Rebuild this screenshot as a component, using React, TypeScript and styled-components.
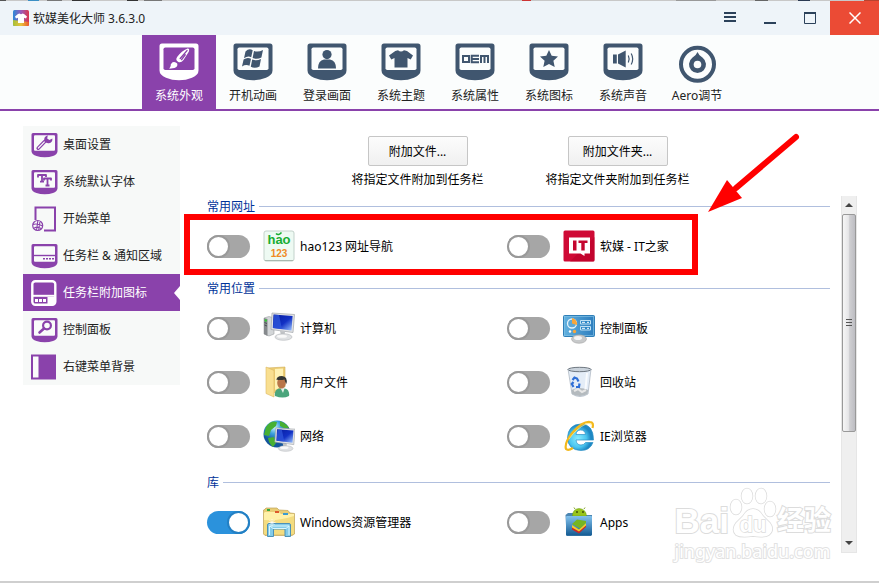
import React from 'react';
import styled, { createGlobalStyle } from 'styled-components';

const PURPLE = '#8a42ab';
const NAVY = '#40566f';

const GlobalStyle = createGlobalStyle`
  *, *::before, *::after { box-sizing: border-box; }
  body {
    margin: 0;
    background: #fff;
    color: #000;
    font: 12px/17px "Noto Sans", "Noto Sans CJK SC", sans-serif;
  }
  button, input { font: inherit; color: inherit; margin: 0; }
  button { padding: 0; border: 0; background: none; cursor: pointer; }
  svg { display: block; flex: none; }
`;

const Window = styled.div`
  display: flex;
  flex-direction: column;
  min-height: 100vh;
  border-bottom: 2px solid #cfcfcf;
`;

const TopEdge = styled.div`
  height: 1px;
  background: linear-gradient(
    90deg,
    #555 6px, #c8c8c8 6px 28px, #3b8fc4 28px 39px, #c8c8c8 39px 47px, #777 47px 62px,
    #c8c8c8 62px 72px, #333 72px 90px, #c8c8c8 90px 127px, #333 127px 138px,
    #c8c8c8 138px 144px, #777 144px 162px, #c8c8c8 162px 522px, #c33 522px 531px,
    #c8c8c8 531px 676px, #999 676px 716px, #c8c8c8 716px 755px, #666 755px 768px,
    #c8c8c8 768px 798px, #2b3a52 798px 810px, #c8c8c8 810px 864px, #b8432f 864px
  );
`;

const TitleBar = styled.header`
  display: flex;
  align-items: stretch;
  height: 34px;
  background: #eef4f9;
`;

const AppTitle = styled.h1`
  display: flex;
  align-items: center;
  gap: 4px;
  flex: 1;
  margin: 0;
  padding-left: 13px;
  font-size: 12px;
  font-weight: 400;
  color: #222;
`;

const WindowButton = styled.button<{ $close?: boolean }>`
  display: flex;
  align-items: center;
  justify-content: center;
  width: ${p => (p.$close ? 49 : 40)}px;
  background: ${p => (p.$close ? '#eb4b35' : 'transparent')};
`;

const TabBar = styled.nav`
  display: flex;
  padding-left: 142px;
  border-bottom: 2px solid ${PURPLE};
  background: #fbfdfd;
`;

const Tab = styled.button<{ $active?: boolean }>`
  display: flex;
  flex-direction: column;
  align-items: center;
  gap: 6px;
  width: 74px;
  height: 74px;
  padding-top: 8px;
  white-space: nowrap;
  color: ${p => (p.$active ? '#fff' : '#222')};
  background: ${p => (p.$active ? PURPLE : 'transparent')};
`;

const Main = styled.main`
  display: flex;
  flex: 1;
  padding: 15px 22px 28px 23px;
`;

const Sidebar = styled.nav`
  align-self: flex-start;
  width: 157px;
  background: #f7f9f8;
`;

const SideItem = styled.button<{ $active?: boolean }>`
  position: relative;
  display: flex;
  align-items: center;
  gap: 4px;
  width: 100%;
  height: 37px;
  padding-left: 8px;
  text-align: left;
  color: ${p => (p.$active ? '#fff' : '#222')};
  background: ${p => (p.$active ? PURPLE : 'transparent')};
  &::after {
    content: '';
    display: ${p => (p.$active ? 'block' : 'none')};
    position: absolute;
    right: 0;
    top: 12px;
    border: 7px solid transparent;
    border-right: 6px solid #fff;
    border-left: 0;
  }
`;

const Content = styled.section`
  display: flex;
  flex-direction: column;
  flex: 1;
  margin-left: 27px;
`;

const Actions = styled.div`
  display: grid;
  grid-template-columns: 200px 200px;
  justify-content: center;
  padding: 10px 29px 5px 0;
`;

const Action = styled.div`
  display: flex;
  flex-direction: column;
  align-items: center;
  gap: 5px;
`;

const PushButton = styled.button`
  width: 100px;
  height: 30px;
  border: 1px solid #c6c6c6;
  border-radius: 2px;
  background: linear-gradient(#fcfcfc, #f0f0f0);
`;

const ScrollArea = styled.div`
  display: flex;
  flex: 1;
  gap: 11px;
`;

const Groups = styled.div`
  flex: 1;
`;

const Group = styled.fieldset<{ $gap: number }>`
  position: relative;
  min-width: 0;
  margin: 0 0 ${p => p.$gap}px;
  padding: 0;
  border: 0;
`;

const GroupHeading = styled.h2`
  display: flex;
  align-items: center;
  gap: 4px;
  height: 26px;
  margin: 0;
  font-size: 12px;
  font-weight: 400;
  color: #003399;
  &::after {
    content: '';
    flex: 1;
    height: 1px;
    background: #b0bfde;
  }
`;

const Options = styled.div`
  display: grid;
  grid-template-columns: 1fr 1fr;
  padding-right: 23px;
`;

const Option = styled.label`
  display: flex;
  align-items: center;
  height: 54px;
  gap: 5px;
`;

const Switch = styled.input`
  appearance: none;
  position: relative;
  width: 43px;
  height: 23px;
  margin-right: 8px;
  border-radius: 12px;
  background: #a6a6a6;
  &::before {
    content: '';
    position: absolute;
    left: 0;
    top: 0;
    width: 23px;
    height: 23px;
    border: 2px solid #999;
    border-radius: 50%;
    background: #fff;
  }
  &:checked { background: #2b92dc; }
  &:checked::before {
    left: 20px;
    border-color: #2380c4;
  }
`;

const ScrollBar = styled.div`
  display: flex;
  flex-direction: column;
  width: 16px;
  margin-top: 3px;
  border: solid #e6e6e6;
  border-width: 0 1px 1px;
  background: #efefef;
`;

const ScrollButton = styled.button`
  display: flex;
  align-items: center;
  justify-content: center;
  width: 14px;
  height: 18px;
`;

const Track = styled.div`
  flex: 1;
`;

const Thumb = styled.div`
  display: flex;
  align-items: center;
  justify-content: center;
  height: 68%;
  border: 1px solid #999;
  border-radius: 2px;
  background: linear-gradient(90deg, #f6f6f6, #e6e6e8 45%, #cfcfd2 55%, #bdbdc2);
`;

const Highlight = styled.div`
  position: absolute;
  left: -23px;
  right: 132px;
  top: 21px;
  height: 61px;
  border: 6px solid #f00;
  pointer-events: none;
`;

const Arrow = styled.svg`
  position: absolute;
  right: 28px;
  top: -62px;
  pointer-events: none;
`;

const Watermark = styled.div`
  position: absolute;
  right: 48px;
  bottom: 20px;
  color: #fff;
  paint-order: stroke fill;
  pointer-events: none;
`;

const Brand = styled.div`
  display: flex;
  align-items: flex-end;
  font: 700 35px/36px "Liberation Sans", "Noto Sans CJK SC", sans-serif;
  -webkit-text-stroke: 2px #dcdcdc;
`;

const BrandCjk = styled.span`
  font-size: 27px;
`;

const Domain = styled.div`
  font: 400 18px/24px "Noto Sans", sans-serif;
  -webkit-text-stroke: 2px #e2e2e2;
`;

const Shell = styled.div`
  position: relative;
`;

/* ---------- toolbar icons ---------- */

const MonitorIcon = ({ fg = NAVY, bg = '#fbfdfd', children }: { fg?: string; bg?: string; children: React.ReactNode }) => (
  <svg width="40" height="38" viewBox="0 0 40 38" fill={fg}>
    <path d="M3 .5H37Q39.5.5 39.5 3V27.5Q39.5 32 33 34.7Q27 37.3 20 37.3Q13 37.3 7 34.7Q.5 32 .5 27.5V3Q.5.5 3 .5Z" />
    <rect x="4.5" y="4.5" width="31" height="22.5" rx="1.8" fill={bg} />
    {children}
  </svg>
);

const TabIcons: Record<string, React.ReactNode> = {
  look: (
    <MonitorIcon fg="#fff" bg={PURPLE}>
      <path d="M28.5 5.5Q31 5.2 29.8 8.8L24.5 17Q21.8 20.5 19 18.8Q16 16.8 18.3 13.8Q22.5 8 28.5 5.5Z" />
      <path d="M28 7.6L21.2 15.5M26.2 11.8L22.6 16.6" stroke={PURPLE} strokeWidth="1.4" fill="none" strokeLinecap="round" />
      <path d="M13.6 19.3Q16.5 18.5 18.2 20.6Q19.2 24 15.4 25.1L10.3 25.8Q12.2 23.4 11.8 21.3Z" />
    </MonitorIcon>
  ),
  boot: (
    <MonitorIcon>
      <path d="M12.5 8.4Q16 5 19.7 7.2L18.2 14.3Q15 12.4 11 15.2ZM21 8Q25.3 9.5 30 7L28.4 14.4Q24 17 19.6 15ZM10.6 16.6Q14.2 13.9 18 15.8L16.5 22.8Q13 20.8 9 23.4ZM19.2 16.5Q23.6 18.2 28 16L26.5 23.4Q22 26 17.8 23.8Z" />
    </MonitorIcon>
  ),
  login: (
    <MonitorIcon>
      <circle cx="20" cy="11.6" r="4.6" />
      <path d="M11 25.5Q11 17.5 17 16.5H23Q29 17.5 29 25.5Z" />
    </MonitorIcon>
  ),
  theme: (
    <MonitorIcon>
      <path d="M14.3 8L17 7.3Q20 9.8 23 7.3L26 8L32 12.5L29.7 16.6L26.5 15V24.5H13.5V15L10.3 16.6L8 12.5Z" />
    </MonitorIcon>
  ),
  oem: (
    <MonitorIcon>
      <path d="M8 13H14V19H8ZM24 12.8H16.7V19.2H24M17 16H24M26 20V13H33V20M29.5 13V20" fill="none" stroke={NAVY} strokeWidth="2" />
    </MonitorIcon>
  ),
  icons: (
    <MonitorIcon>
      <path d="M20 7L22.7 12.8L29 13.5L24.4 17.8L25.7 24.1L20 21L14.3 24.1L15.6 17.8L11 13.5L17.3 12.8Z" />
    </MonitorIcon>
  ),
  sound: (
    <MonitorIcon>
      <path d="M10 11.5H13.8V20.5H10ZM15 11.5L22.7 7.5V24.5L15 20.5Z" />
      <path d="M25.3 12.5Q27 16 25.3 19.5M28.2 10.5Q31.2 16 28.2 21.5" fill="none" stroke={NAVY} strokeWidth="1.2" />
    </MonitorIcon>
  ),
  aero: (
    <svg width="40" height="38" viewBox="0 0 40 38" overflow="visible">
      <circle cx="20.5" cy="21.3" r="16.5" fill="none" stroke={NAVY} strokeWidth="4" />
      <path d="M20.500 9Q21.500 12 25.700 14.800A8.500 8.500 0 1 1 15.300 14.800Q19.500 12 20.500 9Z" fill={NAVY} />
      <circle cx="20.5" cy="21.5" r="3.8" fill="#fbfdfd" />
    </svg>
  ),
};

/* ---------- sidebar icons ---------- */

const SmallMonitor = ({ children }: { children: React.ReactNode }) => (
  <svg width="28" height="26" viewBox="0 0 28 26" fill={PURPLE}>
    <path d="M2 1H25Q26.500 1 26.500 2.500V19.500Q26 22.500 22 24Q18.500 25.300 13.700 25.300Q9 25.300 5.500 24Q1 22.500 .5 19.500V2.500Q.5 1 2 1Z" />
    <rect x="3" y="3.2" width="21" height="15.500" rx="1" fill="#f9fbfa" />
    {children}
  </svg>
);

const SideIcons: Record<string, React.ReactNode> = {
  desktop: (
    <SmallMonitor>
      <path d="M7.2 16.2L13.7 9.6" stroke={PURPLE} strokeWidth="3.6" strokeLinecap="round" />
      <path d="M7.400 16L13.600 9.700" stroke="#f9fbfa" strokeWidth="1.2" strokeLinecap="round" />
      <path d="M16.800 3.200L16.200 6.600L18.400 8.100L21.400 6.600Q21.600 11 18 11.200Q15.600 11.600 13.400 9.600Q12.200 4.600 16.800 3.200Z" />
    </SmallMonitor>
  ),
  font: (
    <SmallMonitor>
      <path d="M6.500 6H15.500M11 6V12.500M7 5.500V8.500M15 5.500V8M9 12.700H13M12.500 9.500H20.500M16.500 9.500V16.500M13 9V11.500M20 9V11.500M14.500 16.500H18.500" fill="none" stroke={PURPLE} strokeWidth="1.8" />
    </SmallMonitor>
  ),
  start: (
    <svg width="28" height="26" viewBox="0 0 28 26" fill="none" stroke={PURPLE}>
      <path d="M4.500 14V1.500H24V24.500H13" strokeWidth="2" />
      <circle cx="6.7" cy="19.5" r="5" strokeWidth="1.2" />
      <path d="M6.800 15L5.600 24M2 18.500Q6 17 11.500 20M3.200 22Q7 20 10.400 22.700M8.900 16L7.700 24" strokeWidth="1.100" />
    </svg>
  ),
  taskbar: (
    <SmallMonitor>
      <path d="M3 12.500H24" stroke={PURPLE} strokeWidth="1.4" />
      <path d="M12 15.800H23" stroke={PURPLE} strokeWidth="1.6" strokeDasharray="2 1" />
    </SmallMonitor>
  ),
  pinned: (
    <svg width="28" height="26" viewBox="0 0 28 26">
      <rect x="1.300" y="1.300" width="23" height="23.400" rx="3" fill="none" stroke="#fff" strokeWidth="2.400" />
      <path d="M2 15.800H24" stroke="#fff" strokeWidth="2" />
      <path d="M4 19H7V22H4ZM8 19H11V22H8ZM12 19H15V22H12ZM16.500 17H24V24H16.500Z" fill="#fff" />
    </svg>
  ),
  control: (
    <SmallMonitor>
      <circle cx="16" cy="8.500" r="3.900" fill="none" stroke={PURPLE} strokeWidth="2.200" />
      <path d="M13 11.500L8.500 15.500" stroke={PURPLE} strokeWidth="2.600" strokeLinecap="round" />
    </SmallMonitor>
  ),
  context: (
    <svg width="28" height="26" viewBox="0 0 28 26">
      <path d="M0 .5H25V25.500H0Z" fill={PURPLE} />
      <path d="M2 2.500H7.500V23.500H2Z" fill="#fbfbfb" />
    </svg>
  ),
};

/* ---------- shortcut icons ---------- */

const Screen = ({ id }: { id: string }) => (
  <>
    <defs>
      <linearGradient id={id} x1="0" y1="0" x2="1" y2="1">
        <stop offset="0" stopColor="#061a9c" />
        <stop offset=".55" stopColor="#1231c5" />
        <stop offset="1" stopColor="#9cc5ff" />
      </linearGradient>
    </defs>
    <path d="M9 1L31.500 2.500L30 20.500L8 17.500Z" fill="#e2e3e5" stroke="#a0a5aa" strokeWidth=".7" />
    <path d="M10.500 2.600L29.600 4L28.500 18.400L9.800 15.900Z" fill={`url(#${id})`} />
    <path d="M11 2.700L16 3L19 17L10 15.900Z" fill="#3058dc" opacity=".75" />
    <path d="M17 19L22 19.600L21.500 23H18Z" fill="#bfc2c5" />
    <ellipse cx="20.500" cy="25" rx="8.500" ry="3.300" fill="#dfe1e3" stroke="#b2b5b8" strokeWidth=".6" />
    <ellipse cx="19" cy="24.200" rx="5" ry="1.500" fill="#f9f9f9" />
  </>
);

const OptionIcons: Record<string, React.ReactNode> = {
  hao: (
    <svg width="32" height="32" viewBox="0 0 32 32">
      <rect x="1" y="1" width="30" height="30" rx="2" fill="#eefaf3" stroke="#c3d2cb" />
      <path d="M2 30.500H30" stroke="#a9b8b1" />
      <g fontFamily="Liberation Sans, sans-serif" textAnchor="middle" fontWeight="700">
        <text x="16" y="14" fontSize="13" fill="#18ad32">hao</text>
        <text x="16" y="27" fontSize="10" fill="#f08a24">123</text>
      </g>
      <path d="M13 3.500Q15.500 6 18.500 2.500" fill="none" stroke="#18ad32" strokeWidth="1.600" />
    </svg>
  ),
  ithome: (
    <svg width="32" height="32" viewBox="0 0 32 32">
      <rect x=".5" y=".5" width="31" height="31" rx="1.500" fill="#cf0a35" />
      <path d="M31.500 7V30Q31.500 31.500 30 31.500H7Z" fill="#b90029" opacity=".6" />
      <path d="M6 7.500H27V23.500H21.500V26L17.500 23.500H6Z" fill="#fff" />
      <path d="M10 10.500H13.500V20.500H10ZM15.500 10.500H24.500V13H21.700V20.500H18.300V13H15.500Z" fill="#c4062f" />
    </svg>
  ),
  computer: (
    <svg width="32" height="32" viewBox="0 0 32 32">
      <path d="M1 6L6 4.500L11 6V22L6 24L1 22Z" fill="#d3d6d8" stroke="#9a9ea1" strokeWidth=".6" />
      <path d="M1 6L4.500 7V24L1 22Z" fill="#85898c" />
      <path d="M1.500 10.500L4 11.500M1.500 13L4 14" stroke="#4a4f52" />
      <circle cx="2.800" cy="8.500" r="1.200" fill="#35c637" />
      <Screen id="pc-screen" />
    </svg>
  ),
  user: (
    <svg width="32" height="32" viewBox="0 0 32 32">
      <path d="M4 2L22 1V21L11 27L4 26Z" fill="#edcd74" stroke="#d2ae55" strokeWidth=".6" />
      <path d="M12 3L20 2.500V20L12 24Z" fill="#fff2b4" />
      <path d="M3 1L11 4.500V31L3 27.500Z" fill="#f9df90" stroke="#dbb962" strokeWidth=".6" />
      <path d="M12 30Q11 24 16 22.500H22Q27 24 26 30Q20 33 12 30Z" fill="#4aa57c" />
      <path d="M17 21L20 27L22 21Z" fill="#e3efe7" />
      <ellipse cx="18.500" cy="17" rx="4.300" ry="5.500" fill="#b9764a" />
      <path d="M13.500 15Q13 10 19 10Q25 10.500 23.500 18Q22 16 21.500 13.500Q17 14.500 13.500 13.500Z" fill="#343634" />
    </svg>
  ),
  network: (
    <svg width="32" height="32" viewBox="0 0 32 32">
      <defs>
        <radialGradient id="globe" cx=".4" cy=".25">
          <stop stopColor="#c8f2ff" />
          <stop offset=".5" stopColor="#3a9fdc" />
          <stop offset="1" stopColor="#14559c" />
        </radialGradient>
      </defs>
      <circle cx="14" cy="14" r="13.500" fill="url(#globe)" />
      <path d="M3 7Q8 0 14 2L13 6L8 10L6 16L1 15ZM17 1Q24 4 26 8H21L17 6ZM5 18L11 17L13 23L10 27Q6 24 5 18Z" fill="#48b032" />
      <g transform="translate(5 7) scale(.86)"><Screen id="net-screen" /></g>
    </svg>
  ),
  panel: (
    <svg width="32" height="32" viewBox="0 0 32 32">
      <defs>
        <linearGradient id="panel-blue"><stop stopColor="#62b1df" /><stop offset="1" stopColor="#2d7dbd" /></linearGradient>
      </defs>
      <rect x=".5" y="3.500" width="31" height="21" rx="1" fill="url(#panel-blue)" stroke="#2f7fb8" />
      <rect x="1.500" y="4.500" width="29" height="19" fill="none" stroke="#80c1e6" strokeWidth=".7" />
      <circle cx="9" cy="11.500" r="4.500" fill="#5ca8d7" stroke="#e5f4fb" strokeWidth="1.300" />
      <path d="M9 11.500V6A6 6 0 0 1 14 13Z" fill="#f8a63a" />
      <path d="M17.500 8.500H27.500V12H17.500ZM17.500 14.500H27.500V18H17.500Z" fill="#2a86c6" stroke="#bfe2f5" />
      <path d="M19 10.300H22M24 10.300H26M19 16.300H22M24 16.300H26" stroke="#fff" />
      <circle cx="7" cy="19.500" r="1.200" fill="#fff" />
      <circle cx="11.500" cy="19.500" r="1.700" fill="#f8a63a" />
      <ellipse cx="16" cy="27" rx="7.500" ry="4.300" fill="#c7c9ca" stroke="#999" strokeWidth=".5" />
      <ellipse cx="15" cy="26" rx="4" ry="2" fill="#f4f4f4" />
    </svg>
  ),
  bin: (
    <svg width="32" height="32" viewBox="0 0 32 32">
      <path d="M5 3H28L25 28Q17 33 9 28Z" fill="#e4edf7" stroke="#a6b0bb" strokeWidth=".7" />
      <path d="M8.500 24Q16 20 25.300 24L24.500 28Q17 32 9 28Z" fill="#b4babe" />
      <path d="M11 25L15 23L19 26L23 24" stroke="#e7e7e7" strokeWidth="2" fill="none" />
      <ellipse cx="16.500" cy="3.500" rx="11.500" ry="2.200" fill="#cad3dc" stroke="#6e7780" strokeWidth="1" />
      <path d="M24 7L22.500 23" stroke="#fff" opacity=".8" strokeWidth="2" />
      <path d="M9.500 14L11.500 11.500L14 12.500L15.500 15.500M16.500 17.500L16 21H13M10.500 21L8.800 18L10.500 16" fill="none" stroke="#2f6fd6" strokeWidth="2.200" />
    </svg>
  ),
  ie: (
    <svg width="32" height="32" viewBox="0 0 32 32">
      <defs>
        <radialGradient id="ie-blue" cx=".4" cy=".55"><stop stopColor="#8aecff" /><stop offset=".65" stopColor="#4cc6f0" /><stop offset="1" stopColor="#1d88c4" /></radialGradient>
      </defs>
      <path d="M30.500 20H13Q13.500 25 18 25Q21 25 22.500 22.500H30Q27 30.500 18 30.500Q5 30 4.500 18Q5 4.500 17.500 4Q30.500 4 30.500 20ZM13 14.500H22.500Q22 10 17.700 10Q13.500 10 13 14.500Z" fill="url(#ie-blue)" stroke="#2c91c5" strokeWidth=".7" />
      <path d="M29.500 8Q31 2 27 2Q20 1 10 12Q1 23 3 29Q5 31 10 28" fill="none" stroke="#f3b91c" strokeWidth="2.200" />
      <path d="M28.500 5Q28 2.500 23 4Q14 8 6 19" fill="none" stroke="#ffe878" strokeWidth=".8" />
    </svg>
  ),
  explorer: (
    <svg width="32" height="32" viewBox="0 0 32 32">
      <path d="M1 4L3 2H14L16 4L25 4.500L27 7L31.500 7.500V28L29 29.500H2L.5 28V4Z" fill="#e9cd75" stroke="#bea359" strokeWidth=".7" />
      <path d="M2 6H16L18 8H31V28H1V7Z" fill="#fff1a9" />
      <path d="M1 14Q17 15 31 10V28H1Z" fill="#f3dc80" />
      <path d="M4 3H7V5H4Z" fill="#35ab40" /><path d="M12 5H16V7H12Z" fill="#dd5a2c" /><path d="M20 7H25V9H20Z" fill="#3b9bd1" />
      <path d="M4.500 30.500V19Q4.500 17.500 6 17.500H26Q27.500 17.500 27.500 19V30.500H22V23H10.500V30.500Z" fill="#83cbe8" stroke="#4b91b8" />
      <path d="M6.500 29V20H26V29M7 20L10 22.500H23L26 20" fill="none" stroke="#d8f6ff" />
      <path d="M9 13V20M5.500 16.500H12.500M6.500 14L11.500 19M11.500 14L6.500 19" stroke="#fff" strokeWidth=".7" />
    </svg>
  ),
  apps: (
    <svg width="32" height="32" viewBox="0 0 32 32">
      <defs><linearGradient id="apps-blue" x2="0" y2="1"><stop stopColor="#81c1ed" /><stop offset="1" stopColor="#145b93" /></linearGradient></defs>
      <path d="M2.500 9L5 7H10L12 9H29V28L28 30H3.500Z" fill="#4c86b2" />
      <path d="M9.500 10Q9.500 3 16 2.500Q23 3 23.500 10Z" fill="#99c51c" stroke="#6b9c10" strokeWidth=".5" />
      <path d="M12 3L11 1.500M21 3L22 1.500" stroke="#86a829" />
      <circle cx="14" cy="6" r=".8" /><circle cx="20" cy="6" r=".8" />
      <rect x="3" y="10" width="26" height="19.500" rx="1" fill="url(#apps-blue)" />
      <path d="M9 20.500L16 25L23 18.500V21L16 27.500L9 23.500Z" fill="#c6282b" />
      <path d="M9 19L16 23.500L23 17V19.500L16 25.500L9 21.500Z" fill="#f5ce26" />
      <path d="M9 18L14 13.500L23 15V17L17 22.500Z" fill="#76b521" />
    </svg>
  ),
};

const LogoIcon = () => (
  <svg width="16" height="16" viewBox="0 0 16 16">
    <defs>
      <linearGradient id="logo-top" x1="0" y1="0" x2="1" y2="0"><stop stopColor="#2c89d8" /><stop offset=".5" stopColor="#985bba" /><stop offset="1" stopColor="#dc354d" /></linearGradient>
      <linearGradient id="logo-low" x1="0" y1="0" x2="1" y2="0"><stop stopColor="#a5bf39" /><stop offset=".5" stopColor="#e9c43c" /><stop offset="1" stopColor="#ec562d" /></linearGradient>
    </defs>
    <rect width="16" height="16" rx="1.500" fill="url(#logo-top)" />
    <path d="M0 10L16 12V14.500Q16 16 14.500 16H1.500Q0 16 0 14.500Z" fill="url(#logo-low)" />
    <path d="M5 4L6.500 3.600Q8 5 9.500 3.600L11 4L14 6.500L13 8.500L11 7.800V13H5V7.800L3 8.500L2 6.500Z" fill="#fff" />
  </svg>
);

const tabs = [
  ['look', '系统外观'],
  ['boot', '开机动画'],
  ['login', '登录画面'],
  ['theme', '系统主题'],
  ['oem', '系统属性'],
  ['icons', '系统图标'],
  ['sound', '系统声音'],
  ['aero', 'Aero调节'],
];

const sideItems = [
  ['desktop', '桌面设置'],
  ['font', '系统默认字体'],
  ['start', '开始菜单'],
  ['taskbar', '任务栏 & 通知区域'],
  ['pinned', '任务栏附加图标'],
  ['control', '控制面板'],
  ['context', '右键菜单背景'],
];

const actions = [
  ['附加文件...', '将指定文件附加到任务栏'],
  ['附加文件夹...', '将指定文件夹附加到任务栏'],
];

const groups = [
  { title: '常用网址', gap: 2, marked: true, items: [['hao', 'hao123 网址导航'], ['ithome', '软媒 - IT之家']] },
  {
    title: '常用位置',
    gap: 6,
    items: [
      ['computer', '计算机'],
      ['panel', '控制面板'],
      ['user', '用户文件'],
      ['bin', '回收站'],
      ['network', '网络'],
      ['ie', 'IE浏览器'],
    ],
  },
  { title: '库', gap: 0, items: [['explorer', 'Windows资源管理器'], ['apps', 'Apps']] },
];

export default function App() {
  return (
    <Shell>
      <GlobalStyle />
      <Window>
        <TopEdge />
        <TitleBar>
          <AppTitle><LogoIcon />软媒美化大师 3.6.3.0</AppTitle>
          <WindowButton aria-label="菜单">
            <svg width="12" height="12" viewBox="0 0 12 12"><path d="M0 1H12M0 5H12M0 9H12" stroke="#2b415a" strokeWidth="2" /></svg>
          </WindowButton>
          <WindowButton aria-label="最小化">
            <svg width="12" height="12" viewBox="0 0 12 12"><path d="M0 11H12" stroke="#2b415a" strokeWidth="2" /></svg>
          </WindowButton>
          <WindowButton aria-label="最大化">
            <svg width="12" height="12" viewBox="0 0 12 12"><path d="M0 1H12" stroke="#2b415a" strokeWidth="2" /><path d="M.5 1V11.500H11.500V1" fill="none" stroke="#2b415a" /></svg>
          </WindowButton>
          <WindowButton $close aria-label="关闭">
            <svg width="12" height="12" viewBox="0 0 12 12"><path d="M.5 .5L11.500 11.500M11.500 .5L.5 11.500" stroke="#fff" strokeWidth="1.500" /></svg>
          </WindowButton>
        </TitleBar>
        <TabBar>
          {tabs.map(([icon, label], i) => (
            <Tab key={icon} $active={i === 0}>{TabIcons[icon]}{label}</Tab>
          ))}
        </TabBar>
        <Main>
          <Sidebar>
            {sideItems.map(([icon, label]) => (
              <SideItem key={icon} $active={icon === 'pinned'}>{SideIcons[icon]}{label}</SideItem>
            ))}
          </Sidebar>
          <Content>
            <Actions>
              {actions.map(([label, hint]) => (
                <Action key={label}><PushButton>{label}</PushButton>{hint}</Action>
              ))}
            </Actions>
            <ScrollArea>
              <Groups>
                {groups.map(group => (
                  <Group key={group.title} $gap={group.gap} aria-label={group.title}>
                    <GroupHeading>{group.title}</GroupHeading>
                    <Options>
                      {group.items.map(([icon, label]) => (
                        <Option key={icon}>
                          <Switch type="checkbox" defaultChecked={icon === 'explorer'} />
                          {OptionIcons[icon]}
                          {label}
                        </Option>
                      ))}
                    </Options>
                    {group.marked && (
                      <>
                        <Highlight />
                        <Arrow width="96" height="84" viewBox="0 0 96 84">
                          <path d="M90 6L30 57" stroke="#f00" strokeWidth="6" strokeLinecap="round" />
                          <path d="M2 81L21 49L36 67Z" fill="#f00" />
                        </Arrow>
                      </>
                    )}
                  </Group>
                ))}
              </Groups>
              <ScrollBar>
                <ScrollButton aria-label="向上滚动"><svg width="8" height="4"><path d="M0 4L4 0L8 4Z" fill="#444" /></svg></ScrollButton>
                <Track>
                  <Thumb><svg width="6" height="8"><path d="M0 .5H6M0 3.500H6M0 6.500H6" stroke="#555" /></svg></Thumb>
                </Track>
                <ScrollButton aria-label="向下滚动"><svg width="8" height="4"><path d="M0 0L4 4L8 0Z" fill="#444" /></svg></ScrollButton>
              </ScrollBar>
            </ScrollArea>
          </Content>
        </Main>
      </Window>
      <Watermark>
        <Brand>
          Bai
          <svg width="48" height="52" viewBox="0 0 48 52" fill="#fff" stroke="#dcdcdc" strokeWidth="1.500">
            <ellipse cx="7" cy="20" rx="5.500" ry="7.500" />
            <ellipse cx="18" cy="9" rx="5.500" ry="7.500" />
            <ellipse cx="32" cy="9" rx="5.500" ry="7.500" />
            <ellipse cx="41" cy="22" rx="5.500" ry="7.500" />
            <path d="M24 22Q30 22 34 29L41 36Q46 43 40 48Q35 51 24 49Q12 51 7 48Q2 43 7 36L14 29Q18 22 24 22Z" />
            <text x="24" y="45" textAnchor="middle" fontFamily="Liberation Sans, sans-serif" fontSize="22" fontWeight="700">du</text>
          </svg>
          <BrandCjk>经验</BrandCjk>
        </Brand>
        <Domain>jingyan.baidu.com</Domain>
      </Watermark>
    </Shell>
  );
}
